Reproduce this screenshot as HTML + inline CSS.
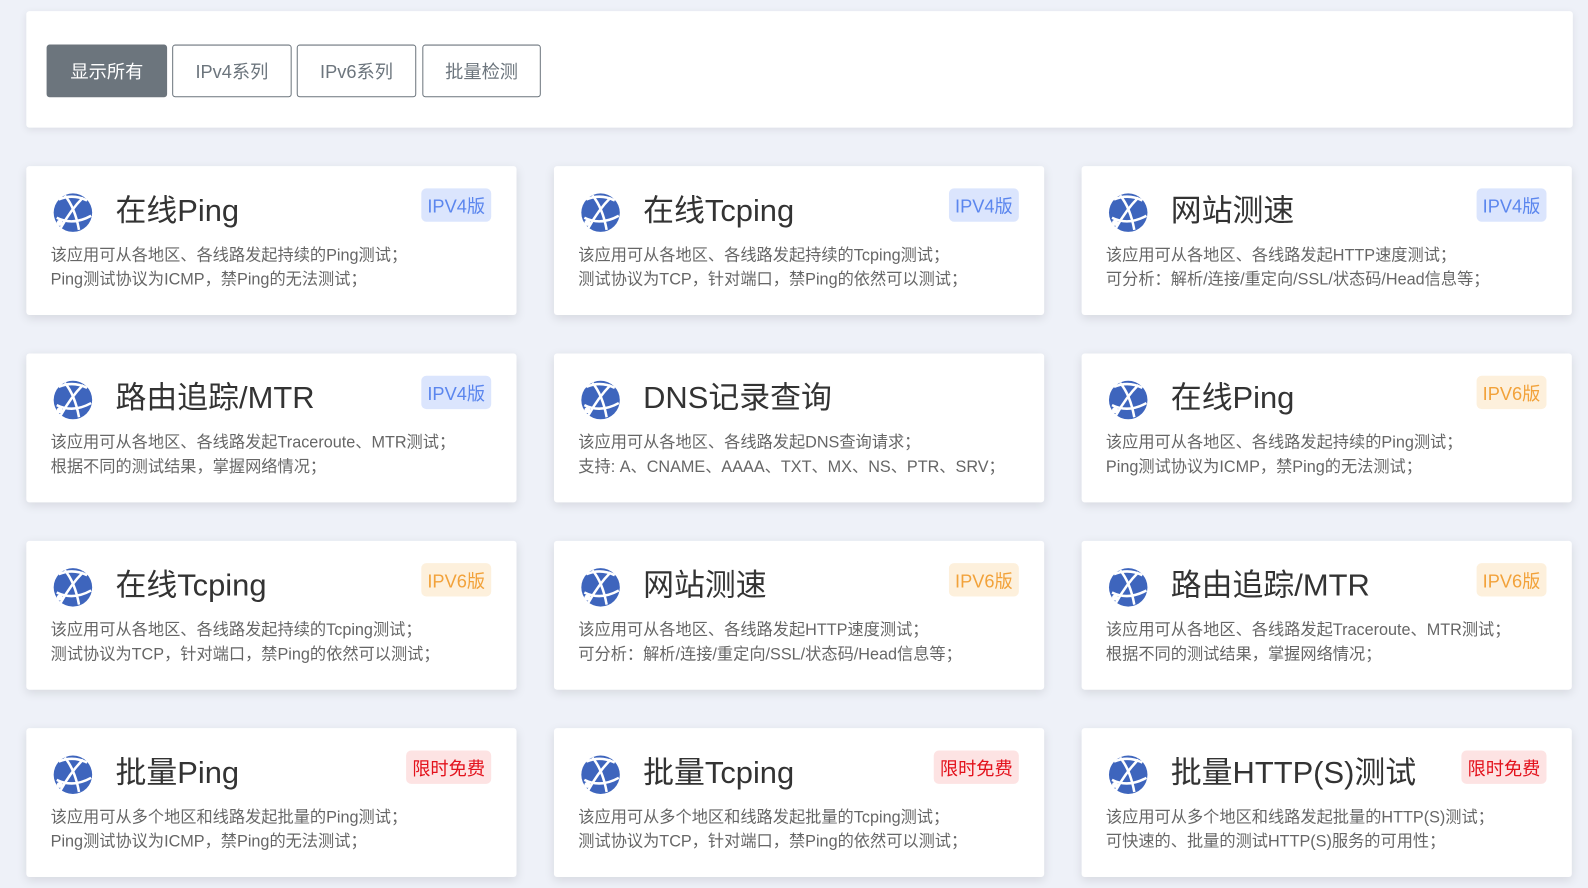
<!DOCTYPE html>
<html><head><meta charset="utf-8"><style>
*{margin:0;padding:0;box-sizing:border-box}
body{width:1588px;height:888px;background:#eef1f8;font-family:"Liberation Sans","Noto Sans CJK SC",sans-serif;overflow:hidden}
#w{position:relative;width:1568px;height:877px;transform:scale(1.01276);transform-origin:0 0}
.top{position:absolute;left:26px;top:11px;width:1527px;height:115px;background:#fff;border-radius:3px;box-shadow:0 2px 8px rgba(0,0,0,.08)}
.btn{position:absolute;top:33px;height:52px;border:1px solid #6c757d;border-radius:3px;color:#6c757d;font-size:18px;display:flex;align-items:center;justify-content:center;background:#fff}
.btn.on{background:#6c757d;color:#fff}
.card{position:absolute;width:484px;height:147px;background:#fff;border-radius:3px;box-shadow:0 3px 10px rgba(0,0,0,.1)}
.card svg{position:absolute;left:26px;top:25px}
.t{position:absolute;left:88px;top:19px;font-size:30.5px;color:#333;white-space:nowrap}
.b{position:absolute;top:22px;right:25px;height:33px;padding:0 6px;border-radius:5px;font-size:18px;display:flex;align-items:center}
.v4{background:#dbe5fd;color:#5b86ee}
.v6{background:#fdf0dc;color:#f2a23a}
.fr{background:#fde3e3;color:#e3121c}
.d{position:absolute;left:24px;top:77px;font-size:16px;line-height:24px;color:#666;white-space:nowrap}
</style></head><body><div id="w">
<div class="top">
<div class="btn on" style="left:20px;width:119px">显示所有</div>
<div class="btn" style="left:144px;width:118px">IPv4系列</div>
<div class="btn" style="left:267px;width:118px">IPv6系列</div>
<div class="btn" style="left:391px;width:117px">批量检测</div>
</div>
<svg width="0" height="0" style="position:absolute"><defs><g id="ic">
<circle cx="20" cy="21" r="19" fill="#3e65bd"/>
<path d="M6 8 Q20 2 34 9" stroke="#fff" stroke-width="2.5" fill="none"/>
<path d="M12 4 Q22 16 26 38" stroke="#fff" stroke-width="2.5" fill="none"/>
<path d="M30 6 Q18 18 8 36" stroke="#fff" stroke-width="2.5" fill="none"/>
<path d="M4 26 Q20 34 38 24" stroke="#fff" stroke-width="2.5" fill="none"/>
<circle cx="7" cy="31" r="3" fill="#fff"/>
</g></defs></svg>

<div class="card" style="left:26px;top:164px"><svg width="42" height="42"><use href="#ic"/></svg><div class="t">在线Ping</div><div class="b v4">IPV4版</div><div class="d">该应用可从各地区、各线路发起持续的Ping测试；<br>Ping测试协议为ICMP，禁Ping的无法测试；</div></div>
<div class="card" style="left:547px;top:164px"><svg width="42" height="42"><use href="#ic"/></svg><div class="t">在线Tcping</div><div class="b v4">IPV4版</div><div class="d">该应用可从各地区、各线路发起持续的Tcping测试；<br>测试协议为TCP，针对端口，禁Ping的依然可以测试；</div></div>
<div class="card" style="left:1068px;top:164px"><svg width="42" height="42"><use href="#ic"/></svg><div class="t">网站测速</div><div class="b v4">IPV4版</div><div class="d">该应用可从各地区、各线路发起HTTP速度测试；<br>可分析：解析/连接/重定向/SSL/状态码/Head信息等；</div></div>

<div class="card" style="left:26px;top:349px"><svg width="42" height="42"><use href="#ic"/></svg><div class="t">路由追踪/MTR</div><div class="b v4">IPV4版</div><div class="d">该应用可从各地区、各线路发起Traceroute、MTR测试；<br>根据不同的测试结果，掌握网络情况；</div></div>
<div class="card" style="left:547px;top:349px"><svg width="42" height="42"><use href="#ic"/></svg><div class="t">DNS记录查询</div><div class="d">该应用可从各地区、各线路发起DNS查询请求；<br>支持: A、CNAME、AAAA、TXT、MX、NS、PTR、SRV；</div></div>
<div class="card" style="left:1068px;top:349px"><svg width="42" height="42"><use href="#ic"/></svg><div class="t">在线Ping</div><div class="b v6">IPV6版</div><div class="d">该应用可从各地区、各线路发起持续的Ping测试；<br>Ping测试协议为ICMP，禁Ping的无法测试；</div></div>

<div class="card" style="left:26px;top:534px"><svg width="42" height="42"><use href="#ic"/></svg><div class="t">在线Tcping</div><div class="b v6">IPV6版</div><div class="d">该应用可从各地区、各线路发起持续的Tcping测试；<br>测试协议为TCP，针对端口，禁Ping的依然可以测试；</div></div>
<div class="card" style="left:547px;top:534px"><svg width="42" height="42"><use href="#ic"/></svg><div class="t">网站测速</div><div class="b v6">IPV6版</div><div class="d">该应用可从各地区、各线路发起HTTP速度测试；<br>可分析：解析/连接/重定向/SSL/状态码/Head信息等；</div></div>
<div class="card" style="left:1068px;top:534px"><svg width="42" height="42"><use href="#ic"/></svg><div class="t">路由追踪/MTR</div><div class="b v6">IPV6版</div><div class="d">该应用可从各地区、各线路发起Traceroute、MTR测试；<br>根据不同的测试结果，掌握网络情况；</div></div>

<div class="card" style="left:26px;top:719px"><svg width="42" height="42"><use href="#ic"/></svg><div class="t">批量Ping</div><div class="b fr">限时免费</div><div class="d">该应用可从多个地区和线路发起批量的Ping测试；<br>Ping测试协议为ICMP，禁Ping的无法测试；</div></div>
<div class="card" style="left:547px;top:719px"><svg width="42" height="42"><use href="#ic"/></svg><div class="t">批量Tcping</div><div class="b fr">限时免费</div><div class="d">该应用可从多个地区和线路发起批量的Tcping测试；<br>测试协议为TCP，针对端口，禁Ping的依然可以测试；</div></div>
<div class="card" style="left:1068px;top:719px"><svg width="42" height="42"><use href="#ic"/></svg><div class="t">批量HTTP(S)测试</div><div class="b fr">限时免费</div><div class="d">该应用可从多个地区和线路发起批量的HTTP(S)测试；<br>可快速的、批量的测试HTTP(S)服务的可用性；</div></div>
</div></body></html>
